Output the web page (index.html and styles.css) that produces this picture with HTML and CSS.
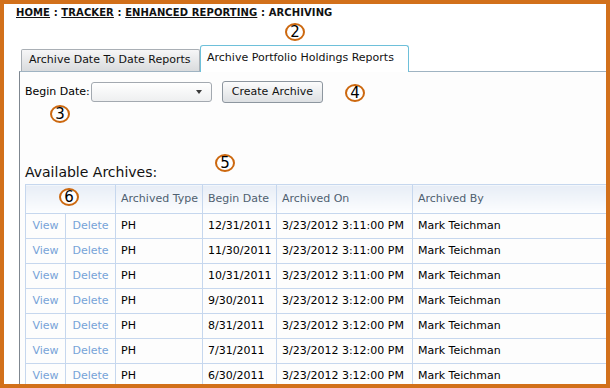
FILE: index.html
```html
<!DOCTYPE html>
<html>
<head>
<meta charset="utf-8">
<link rel="stylesheet" href="styles.css">
</head>
<body>
<div class="frame">
  <div class="crumbs"><a href="#">HOME</a> : <a href="#">TRACKER</a> : <a href="#">ENHANCED REPORTING</a> : <span>ARCHIVING</span></div>
  <div class="tabs">
    <div class="tabstrip">
      <div class="tab">Archive Date To Date Reports</div>
      <div class="tab active">Archive Portfolio Holdings Reports</div>
    </div>
    <div class="panel">
      <div class="form-row">
        <label class="lbl">Begin Date:</label>
        <div class="select"><span class="arrow"></span></div>
        <button class="btn">Create Archive</button>
      </div>
      <h2 class="heading">Available Archives:</h2>
      <table class="grid">
        <colgroup>
          <col class="c-view"><col class="c-del"><col class="c-type"><col class="c-begin"><col class="c-on"><col>
        </colgroup>
        <thead>
          <tr><th colspan="2"></th><th>Archived Type</th><th>Begin Date</th><th>Archived On</th><th>Archived By</th></tr>
        </thead>
        <tbody>
          <tr><td class="lnk">View</td><td class="lnk">Delete</td><td>PH</td><td>12/31/2011</td><td>3/23/2012 3:11:00 PM</td><td>Mark Teichman</td></tr>
          <tr><td class="lnk">View</td><td class="lnk">Delete</td><td>PH</td><td>11/30/2011</td><td>3/23/2012 3:11:00 PM</td><td>Mark Teichman</td></tr>
          <tr><td class="lnk">View</td><td class="lnk">Delete</td><td>PH</td><td>10/31/2011</td><td>3/23/2012 3:11:00 PM</td><td>Mark Teichman</td></tr>
          <tr><td class="lnk">View</td><td class="lnk">Delete</td><td>PH</td><td>9/30/2011</td><td>3/23/2012 3:12:00 PM</td><td>Mark Teichman</td></tr>
          <tr><td class="lnk">View</td><td class="lnk">Delete</td><td>PH</td><td>8/31/2011</td><td>3/23/2012 3:12:00 PM</td><td>Mark Teichman</td></tr>
          <tr><td class="lnk">View</td><td class="lnk">Delete</td><td>PH</td><td>7/31/2011</td><td>3/23/2012 3:12:00 PM</td><td>Mark Teichman</td></tr>
          <tr><td class="lnk">View</td><td class="lnk">Delete</td><td>PH</td><td>6/30/2011</td><td>3/23/2012 3:12:00 PM</td><td>Mark Teichman</td></tr>
        </tbody>
      </table>
    </div>
  </div>
  <div class="ann ann-2">2</div>
  <div class="ann ann-3">3</div>
  <div class="ann ann-4">4</div>
  <div class="ann ann-5">5</div>
  <div class="ann ann-6">6</div>
</div>
</body>
</html>
```

FILE: styles.css
```css
html, body {
  margin: 0;
  padding: 0;
  background: #fff;
}
body {
  font-family: "DejaVu Sans", Verdana, sans-serif;
  font-size: 11px;
  line-height: 14px;
  color: #000;
}
.frame {
  position: relative;
  width: 610px;
  height: 388px;
  box-sizing: border-box;
  border: 4px solid #d2701a;
  overflow: hidden;
  background: #fff;
}
.crumbs {
  padding: 3px 0 0 12px;
  font-size: 10px;
  line-height: 12px;
  font-weight: bold;
  letter-spacing: 0.1px;
  color: #111;
}
.crumbs a {
  color: #111;
  text-decoration: underline;
}
.tabs {
  margin: 26px -20px 0 15px;
}
.tabstrip {
  display: flex;
  align-items: flex-end;
  padding-left: 2px;
}
.tab {
  box-sizing: border-box;
  width: 179px;
  height: 22px;
  padding: 3px 0 0 7px;
  border: 1px solid #a9afb5;
  border-bottom: none;
  border-radius: 2px 2px 0 0;
  background: linear-gradient(#f6f6f7, #d9dbdd);
  color: #111;
  white-space: nowrap;
}
.tab.active {
  position: relative;
  z-index: 1;
  width: 209px;
  height: 27px;
  padding: 5px 0 0 6px;
  margin-bottom: -1px;
  border-color: #6ec0da;
  border-radius: 3px 3px 0 0;
  background: #fff;
}
.panel {
  border-top: 1px solid #9fb3c2;
  border-left: 1px solid #7f8790;
  padding: 0 0 0 5px;
  background: #fdfdfd;
  height: 330px;
}
.form-row {
  display: flex;
  align-items: center;
  padding-top: 9px;
}
.lbl {
  margin-right: 1px;
}
.select {
  position: relative;
  box-sizing: border-box;
  width: 121px;
  height: 20px;
  border: 1px solid #a3a9b0;
  border-radius: 3px;
  background: linear-gradient(#ffffff, #eeeff0);
}
.arrow {
  position: absolute;
  right: 9px;
  top: 7px;
  width: 0;
  height: 0;
  border-left: 3px solid transparent;
  border-right: 3px solid transparent;
  border-top: 4px solid #3a3a3a;
}
.btn {
  box-sizing: border-box;
  height: 22px;
  margin: 0 0 0 10px;
  padding: 0 9px;
  border: 1px solid #8d969f;
  border-radius: 3px;
  background: linear-gradient(#fcfcfc, #dde0e3);
  font-family: "DejaVu Sans", Verdana, sans-serif;
  font-size: 11px;
  line-height: 14px;
  color: #111;
}
.heading {
  margin: 61px 0 3px 0;
  font-size: 14px;
  line-height: 17px;
  font-weight: normal;
  color: #111;
}
.grid {
  width: 100%;
  border-collapse: collapse;
  table-layout: fixed;
}
.c-view { width: 40px; }
.c-del { width: 50px; }
.c-type { width: 87px; }
.c-begin { width: 74px; }
.c-on { width: 136px; }
.grid th, .grid td {
  border: 1px solid #c6d7ee;
  text-align: left;
  white-space: nowrap;
  overflow: hidden;
}
.grid th {
  padding: 7px 5px 7px 5px;
  font-weight: normal;
  color: #4f5f70;
  background: linear-gradient(#e7edf6, #fdfeff);
}
.grid td {
  padding: 5px 5px;
  color: #000;
}
.grid td.lnk {
  text-align: center;
  padding: 5px 0;
  color: #76a3d8;
}
.ann {
  position: absolute;
  box-sizing: border-box;
  width: 20px;
  height: 18px;
  border: 2px solid #cc680f;
  border-radius: 50%;
  background: #fff;
  font-size: 15px;
  line-height: 14px;
  text-align: center;
  color: #000;
}
.ann-2 { left: 281px; top: 19px; }
.ann-3 { left: 46px; top: 101px; }
.ann-4 { left: 341px; top: 80px; }
.ann-5 { left: 211px; top: 150px; }
.ann-6 { left: 55px; top: 184px; }
```
